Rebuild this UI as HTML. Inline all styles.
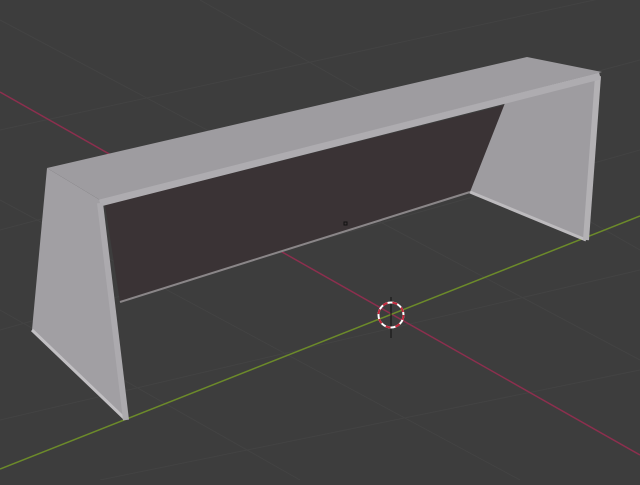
<!DOCTYPE html>
<html><head><style>html,body{margin:0;padding:0;background:#3d3d3d;overflow:hidden}</style></head>
<body>
<svg width="640" height="480" viewBox="0 0 640 480" xmlns="http://www.w3.org/2000/svg">
<rect width="640" height="480" fill="#3d3d3d"/>
<g stroke="#434343" stroke-width="1" fill="none">
<line x1="0" y1="130" x2="640" y2="-10"/>
<line x1="0" y1="230" x2="640" y2="60"/>
<line x1="0" y1="330" x2="640" y2="150"/>
<line x1="0" y1="420" x2="640" y2="270"/>
<line x1="100" y1="480" x2="640" y2="370"/>
<line x1="0" y1="20" x2="640" y2="360"/>
<line x1="200" y1="0" x2="640" y2="250"/>
<line x1="0" y1="200" x2="520" y2="480"/>
<line x1="0" y1="310" x2="300" y2="480"/>
</g>
<line x1="0" y1="92" x2="640" y2="455" stroke="#8c2f4e" stroke-width="1.5"/>
<line x1="0" y1="469" x2="640" y2="216" stroke="#6c8a2a" stroke-width="1.5"/>
<polygon points="105,205 505,105 470,192 120,302" fill="#3a3335"/>
<line x1="120" y1="302" x2="470" y2="192" stroke="#8a8688" stroke-width="2"/>
<polygon points="505,103 598,78 586,240 470,192" fill="#9e9ca0"/>
<line x1="470" y1="192" x2="586" y2="240" stroke="#bdbbbe" stroke-width="3"/>
<line x1="598" y1="76" x2="586" y2="240" stroke="#b3b1b4" stroke-width="6"/>
<polygon points="47,168 100,200 126,420 32,330" fill="#a19fa3"/>
<line x1="32" y1="330" x2="124" y2="418" stroke="#c2c0c3" stroke-width="3"/>
<polygon points="47,168 527,57 602,72 100,200" fill="#9e9ca0"/>
<line x1="100" y1="203" x2="600" y2="76" stroke="#aeacb0" stroke-width="7"/>
<line x1="100" y1="203" x2="126" y2="420" stroke="#acaaae" stroke-width="6"/>
<rect x="344" y="222" width="3" height="3" fill="none" stroke="#111" stroke-width="1"/>
<line x1="391" y1="297" x2="391" y2="338" stroke="#111" stroke-width="1"/>
<circle cx="391" cy="315" r="12.5" fill="none" stroke="#fff" stroke-width="2"/>
<circle cx="391" cy="315" r="12.5" fill="none" stroke="#c2283c" stroke-width="2" stroke-dasharray="5 5"/>
</svg>
</body></html>
